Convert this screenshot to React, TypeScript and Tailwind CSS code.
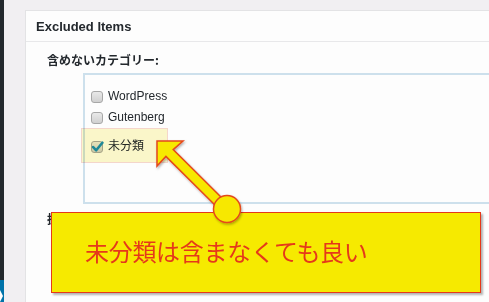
const font = { fontFamily: '"Liberation Sans", "Noto Sans CJK JP", sans-serif' };
const jp = { fontFamily: '"Noto Sans CJK JP", "Liberation Sans", sans-serif' };

const Checkbox = ({ checked = false }: { checked?: boolean }) => (
  <span className="relative inline-block w-[12px] h-[12px] rounded-[3px] border border-[#a7a7a7] bg-gradient-to-b from-[#e9e9e9] to-[#d0d0d0] shrink-0">
    {checked && (
      <svg viewBox="0 0 12 12" className="absolute -left-[1px] -top-[2px] w-[13px] h-[13px]">
        <path d="M2 6.5 L4.8 9.5 L10.5 2.5" fill="none" stroke="#1e8cbe" strokeWidth="2.4" strokeLinecap="round" strokeLinejoin="round" />
      </svg>
    )}
  </span>
);

const categories = [
  { name: "WordPress", checked: false },
  { name: "Gutenberg", checked: false },
  { name: "未分類", checked: true },
];

export default function App() {
  return (
    <div className="relative w-[489px] h-[302px] flex overflow-hidden text-[#23282d]" style={font}>
      {/* admin menu edge */}
      <div className="w-[4px] flex flex-col shrink-0">
        <div className="flex-1 bg-[#23282d]" />
        <div className="relative h-[22px] bg-[#0073aa]">
          <div className="absolute left-0 top-[10px] w-0 h-0 border-y-[6px] border-y-transparent border-l-[3px] border-l-white" />
        </div>
      </div>

      <div className="flex-1 bg-[#f1eff2] pl-[21px] pt-[10px]">
        <div className="h-full bg-[#fdfdfd] border-l border-t border-[#e3e3e5]">
          <div className="h-[31px] border-b border-[#e8e8ea] pl-[10px] flex items-center">
            <h2 className="text-[13px] font-semibold leading-none pt-[1px]">Excluded Items</h2>
          </div>

          <div className="pt-[10px] pl-[21px]">
            <p className="text-[12px] font-semibold leading-[16px]" style={jp}>含めないカテゴリー:</p>
            <div className="mt-[5px] ml-[36px] h-[131px] border-2 border-r-0 border-[#cde0ec] pl-[6px] pt-[11px]">
              {categories.map((c, i) => (
                <div key={c.name} className={`flex items-center gap-[5px] h-[21px] ${i === 2 ? "mt-[8px]" : ""}`}>
                  <Checkbox checked={c.checked} />
                  <span className="text-[12px] leading-none -mt-[2px]">{c.name}</span>
                </div>
              ))}
            </div>
            <p className="mt-[7px] text-[12px] font-semibold leading-[16px]" style={jp}>抜粋の長さ:</p>
          </div>
        </div>
      </div>

      {/* highlight over the checked item */}
      <div className="absolute left-[81px] top-[128px] w-[87px] h-[35px] bg-[#fcf8cb] mix-blend-multiply border border-[#f6d8cd]" />

      {/* callout */}
      <div
        className="absolute left-[51px] top-[212px] w-[430px] h-[81px] bg-[#f6ea00] border-[1.5px] border-[#e5391a] shadow-[2px_2px_2px_rgba(0,0,0,0.3)] flex items-center pl-[33px] pb-[3px]"
      >
        <span className="text-[24px] leading-none text-[#e5391a] tracking-[-0.3px]" style={jp}>未分類は含まなくても良い</span>
      </div>

      <svg className="absolute left-0 top-0 pointer-events-none" width="489" height="302" viewBox="0 0 489 302">
        <defs>
          <filter id="sh" x="-20%" y="-20%" width="140%" height="140%">
            <feDropShadow dx="1" dy="1.5" stdDeviation="1" floodColor="#000" floodOpacity="0.3" />
          </filter>
        </defs>
        <g filter="url(#sh)" fill="#f7e800" stroke="#e4481b" strokeWidth="1.5" strokeLinejoin="miter">
          <path d="M157 141 L183 141 L173.2 149.6 L230.5 206.5 L223.5 213.5 L165.9 156.4 L157 166 Z" />
          <circle cx="227" cy="209" r="13.5" />
        </g>
      </svg>
    </div>
  );
}
